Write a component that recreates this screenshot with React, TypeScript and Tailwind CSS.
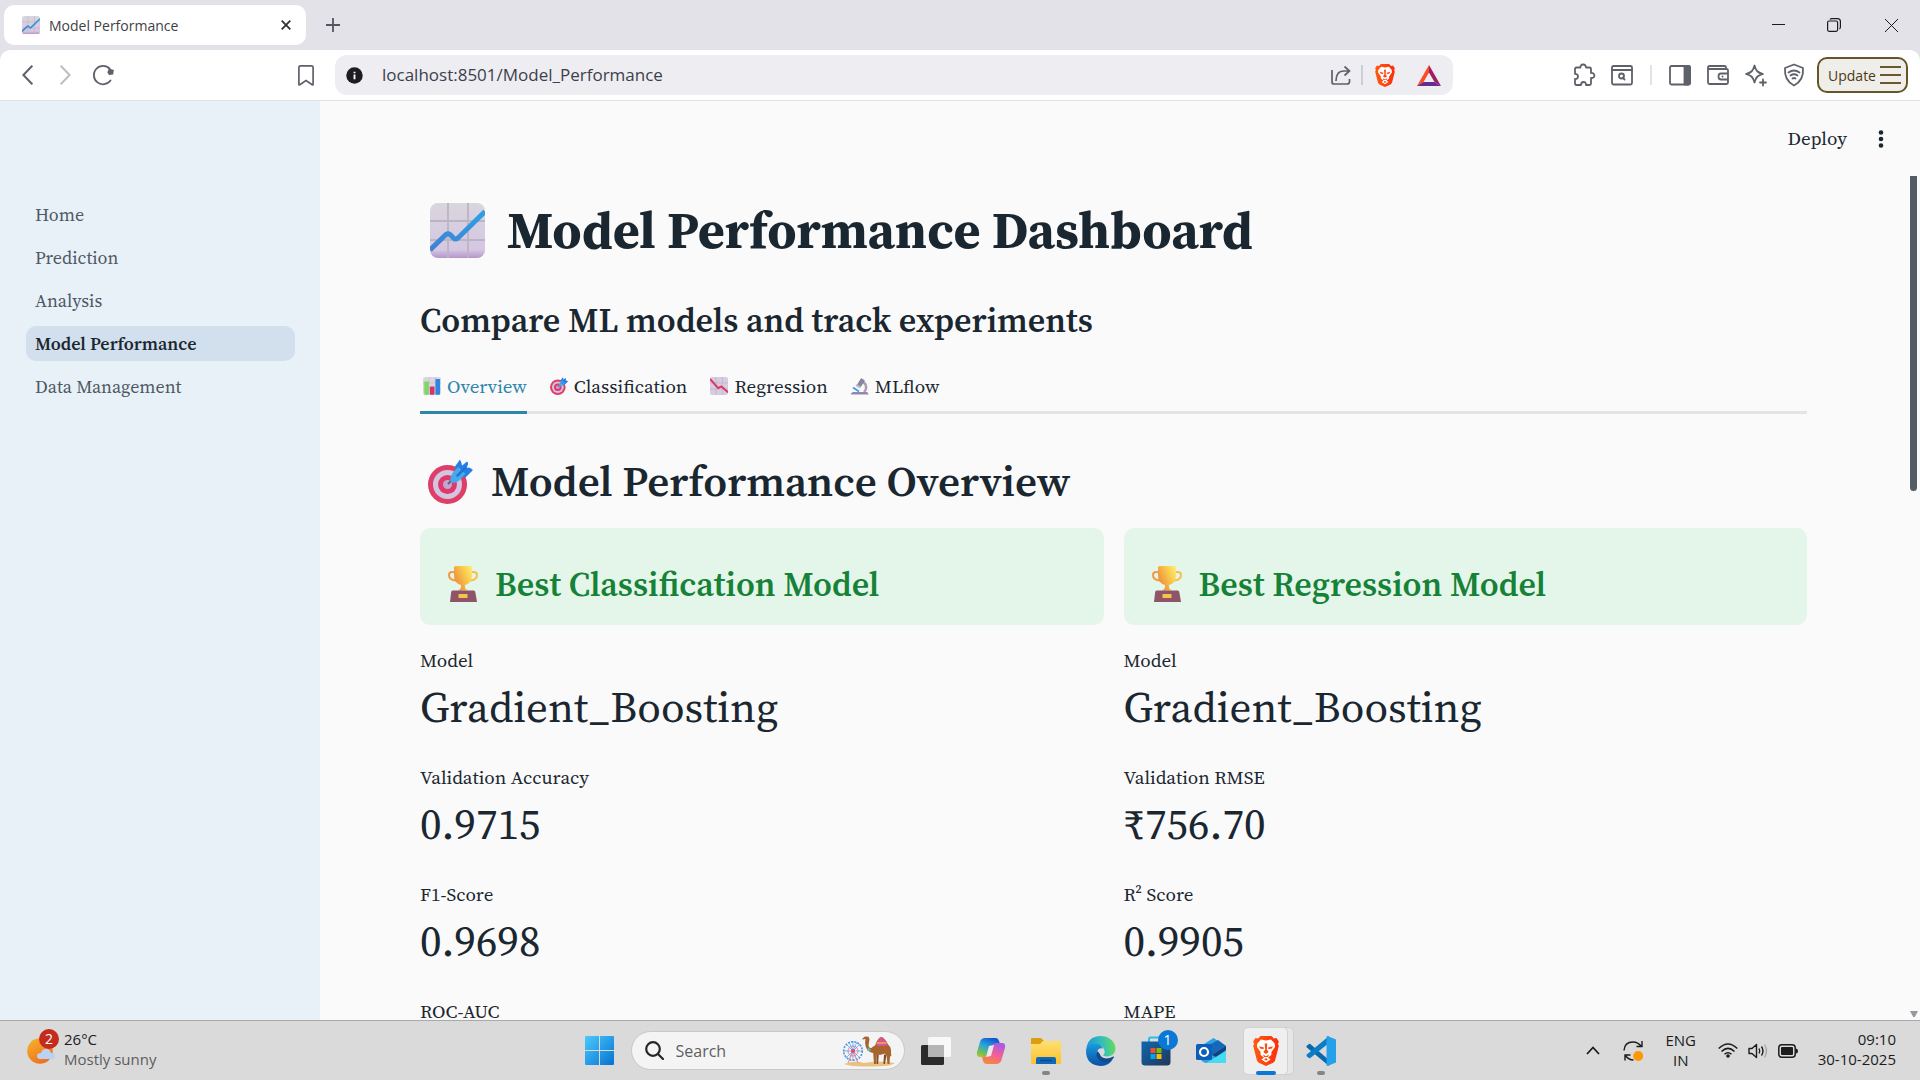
import { useState, type ReactNode } from "react";

type IconProps = { className?: string };

function ChartUp({ className }: IconProps) {
  return (
    <svg viewBox="0 0 55 55" className={className} aria-hidden="true">
      <defs>
        <linearGradient id="cu-bg" x1="0" y1="0" x2="0" y2="1">
          <stop offset="0" stopColor="#d9d6dd" />
          <stop offset="0.85" stopColor="#d5c7e2" />
          <stop offset="1" stopColor="#b595cc" />
        </linearGradient>
        <linearGradient id="cu-line" x1="0" y1="1" x2="1" y2="0">
          <stop offset="0" stopColor="#3f82d2" />
          <stop offset="1" stopColor="#2ea0e6" />
        </linearGradient>
      </defs>
      <rect width="55" height="55" rx="8" fill="url(#cu-bg)" />
      <path d="M18 0v55M38 0v55M0 18h55M0 37h55" stroke="#bcb4c4" strokeWidth="1.800" />
      <path d="M0 47 16 31.500Q18 30 20 31.500L23.500 35Q25.500 37 28 35L55 8.500" fill="none" stroke="url(#cu-line)" strokeWidth="5" />
    </svg>
  );
}

function ChartDown({ className }: IconProps) {
  return (
    <svg viewBox="0 0 55 55" className={className} aria-hidden="true">
      <rect width="55" height="55" rx="7" fill="#d6cbe0" />
      <path d="M18 0v55M38 0v55M0 18h55M0 37h55" stroke="#bcb4c4" strokeWidth="2" />
      <path d="M0 6 25 34l10-5 20 18" fill="none" stroke="#e0355f" strokeWidth="6" strokeLinejoin="round" />
    </svg>
  );
}

function BarChart({ className }: IconProps) {
  return (
    <svg viewBox="0 0 55 55" className={className} aria-hidden="true">
      <rect width="55" height="55" rx="7" fill="#dcd6e2" />
      <path d="M18 0v55M37 0v55M0 18h55M0 37h55" stroke="#c2bac9" strokeWidth="2" />
      <rect x="4" y="14" width="14" height="40" rx="2" fill="#7fd95e" />
      <rect x="21" y="29" width="14" height="25" rx="2" fill="#d6336c" />
      <rect x="38" y="6" width="14" height="48" rx="2" fill="#2f86dd" />
    </svg>
  );
}

function Target({ className }: IconProps) {
  return (
    <svg viewBox="0 0 45 45" className={className} aria-hidden="true">
      <circle cx="19.500" cy="25.500" r="19.500" fill="#dd3f68" />
      <circle cx="19.500" cy="25.500" r="14.500" fill="#d2c5e0" />
      <circle cx="19.500" cy="25.500" r="9.500" fill="#e2376b" />
      <circle cx="19.500" cy="25.500" r="4.500" fill="#bda9cf" />
      <path d="M20 25 27 18" stroke="#6c5c80" strokeWidth="2" />
      <path d="M27 12V7.500L32 .5q1.500 3 2 6L36 5l3-2.500q1.500 1 1 3L38.500 9l2.500-.5q2 .5 4 2.500l-7 7-6 .5z" fill="#2480e2" />
      <path d="M22.500 22c-1-5 3-10 8-14l3 3.500 4 3c-4 5-8 9.500-12 9.500-2 0-3-1-3-2z" fill="#46a9ea" />
      <path d="m29.500 16.500 8-8" stroke="#2374d8" strokeWidth="2.500" strokeLinecap="round" />
    </svg>
  );
}

function Microscope({ className }: IconProps) {
  return (
    <svg viewBox="0 0 18 18" className={className} aria-hidden="true">
      <path d="M10 4.500c5 .5 7 6.500 3 10.500" fill="none" stroke="#a99bb9" strokeWidth="2.400" />
      <path d="m6.500 7.500 3.700-6 3.200 2-3.600 6z" fill="#8f849f" stroke="#7c7190" strokeWidth=".6" />
      <path d="M5.500 7.200 9.800 10 9 11.500 4.600 8.800z" fill="#b9aec8" />
      <path d="m2 10.500 6 4" stroke="#3aa0ea" strokeWidth="2" />
      <path d="M0 17.500q0-2.500 2.500-2.500h13q2 0 2 2.500z" fill="#9686ab" />
    </svg>
  );
}

function Trophy({ className }: IconProps) {
  return (
    <svg viewBox="0 0 30 36" className={className} aria-hidden="true">
      <defs>
        <linearGradient id="tr-cup" x1="0" y1=".6" x2="1" y2="0">
          <stop offset="0" stopColor="#ee8a3c" />
          <stop offset=".55" stopColor="#f7c94b" />
          <stop offset="1" stopColor="#fdf07a" />
        </linearGradient>
      </defs>
      <path d="M7 6H4.500Q1 6 1 9q0 5 7 5.500" fill="none" stroke="#f09a45" strokeWidth="2" />
      <path d="M23 6h2.500Q29 6 29 9q0 5-7 5.500" fill="none" stroke="#f6c04b" strokeWidth="2" />
      <path d="M6 1.500Q6 0 7.500 0h15Q24 0 24 1.500V9q0 8-7 10v2q0 2 3 3.500H10q3-1.500 3-3.500v-2Q6 17 6 9z" fill="url(#tr-cup)" />
      <path d="M4.500 24.500h21q1.500 0 1.800 1.500L29 36H2l1.200-10q.3-1.500 1.300-1.500z" fill="#8e5468" />
      <rect x="10.500" y="28" width="9" height="4" fill="#f6c34c" />
    </svg>
  );
}

function BraveLion({ className }: IconProps) {
  return (
    <svg viewBox="0 0 26 30" className={className} aria-hidden="true">
      <defs>
        <linearGradient id="brave" x1="0" y1="0" x2="1" y2="0">
          <stop offset="0" stopColor="#ff5a12" />
          <stop offset="1" stopColor="#fb2f0c" />
        </linearGradient>
      </defs>
      <path d="M7.500 0h11l2.300 2.500L23.500 2l2.300 3.500-.8 2.500.8 2-3.600 14q-.5 1.500-2 2.700L13 30l-7.200-3.300q-1.500-1.200-2-2.700L.2 10 1 8l-.8-2.500L2.500 2l2.700.5z" fill="url(#brave)" />
      <path d="M8 3.500 13 4.500l5-1 3.800 4.200.2 3.300-3.700 5.200q.6 1.800-.3 3L15 21.500l2.500 2L13 26.500l-4.500-3 2.500-2-3-2.300q-.9-1.200-.3-3L4 11l.2-3.300z" fill="#fff" />
      <path d="m6 10.200 5 1.300-.6 1.800-3.200-.8zM20 10.200l-5 1.300.6 1.800 3.200-.8z" fill="#fb4a12" />
      <path d="M11.700 7.500h2.600l-.5 6 1.900 2.500L13 18l-2.700-2 1.900-2.500zM10 18.500l3 1.700 3-1.700-1 2.500H11zM13 22l1.800 1.500L13 24.800l-1.800-1.300z" fill="#fb4a12" />
    </svg>
  );
}

function Stroke({ className, children }: { className?: string; children: ReactNode }) {
  return (
    <svg viewBox="0 0 24 24" fill="none" stroke="currentColor" strokeWidth="1.800" strokeLinecap="round" strokeLinejoin="round" className={className} aria-hidden="true">
      {children}
    </svg>
  );
}

function ToolButton({ label, children }: { label: string; children: ReactNode }) {
  return (
    <button type="button" aria-label={label} className="flex h-8 w-[38px] items-center justify-center text-[#5e6169]">
      {children}
    </button>
  );
}

function TabStrip() {
  return (
    <div className="flex h-[50px] shrink-0 items-center bg-[#e3e2e8] pl-1 font-['Open_Sans',sans-serif]">
      <div className="flex h-10 w-[302px] items-center rounded-[10px] bg-white pr-3 pl-[18px]">
        <ChartUp className="size-[18px]" />
        <span className="ml-[9px] flex-1 text-[14px] text-[#3f4046]">Model Performance</span>
        <button type="button" aria-label="Close tab" className="flex size-4 items-center justify-center text-[#303136]">
          <svg viewBox="0 0 10 10" className="size-[10px]" stroke="currentColor" strokeWidth="1.800"><path d="m.7.7 8.600 8.600M9.300.7.7 9.300" /></svg>
        </button>
      </div>
      <button type="button" aria-label="New tab" className="ml-[19px] flex size-4 items-center justify-center text-[#55575e]">
        <svg viewBox="0 0 14 14" className="size-[14px]" stroke="currentColor" strokeWidth="1.800"><path d="M7 0v14M0 7h14" /></svg>
      </button>
      <div className="ml-auto flex text-[#1c1c1f]">
        <button type="button" aria-label="Minimize" className="flex h-8 w-14 items-center justify-center">
          <svg viewBox="0 0 13 13" className="size-[13px]" stroke="currentColor"><path d="M0 5.500h13" /></svg>
        </button>
        <button type="button" aria-label="Restore" className="flex h-8 w-14 items-center justify-center">
          <svg viewBox="0 0 14 14" className="size-[14px]" fill="none" stroke="currentColor" strokeWidth="1.200"><rect x=".6" y="3" width="10" height="10.300" rx="1.500" /><path d="M3 1.500Q3.500.6 5 .6h5.500q2.900 0 2.900 3V9q0 1.500-1 2" /></svg>
        </button>
        <button type="button" aria-label="Close window" className="flex h-8 w-[58px] items-center justify-center">
          <svg viewBox="0 0 13 13" className="size-[13px]" stroke="currentColor"><path d="m0 0 13 13M13 0 0 13" /></svg>
        </button>
      </div>
    </div>
  );
}

function Toolbar() {
  return (
    <div className="shrink-0 bg-[#e3e2e8] font-['Open_Sans',sans-serif]">
      <div className="flex h-[51px] items-center rounded-t-[10px] border-b border-[#dfdfe5] bg-white">
        <div className="flex w-[335px] shrink-0 items-center pr-[10px] pl-2">
          <ToolButton label="Back">
            <svg viewBox="0 0 11 20" className="h-5 w-[11px]" fill="none" stroke="currentColor" strokeWidth="2"><path d="M10.300.7 1.400 10l8.900 9.300" /></svg>
          </ToolButton>
          <ToolButton label="Forward">
            <svg viewBox="0 0 11 20" className="h-5 w-[11px]" fill="none" stroke="#bdbec2" strokeWidth="2"><path d="M.7.7 9.600 10 .7 19.300" /></svg>
          </ToolButton>
          <ToolButton label="Reload">
            <svg viewBox="0 0 22 22" className="size-[22px]" fill="none" stroke="currentColor" strokeWidth="1.800"><path d="M18.500 16.500A9.200 9.200 0 1 1 17.800 4.800" strokeLinecap="round" /><path d="m17 4.500 4.800 1.500-.6 4.500-4.200.5-1.700-2.700z" fill="currentColor" stroke="none" /></svg>
          </ToolButton>
          <span className="flex-1" />
          <ToolButton label="Bookmark">
            <svg viewBox="0 0 16 21" className="h-[21px] w-4" fill="none" stroke="currentColor" strokeWidth="1.700"><path d="M.9 2.500Q.9.9 2.500.9h11q1.600 0 1.600 1.600v16.800q0 1-.9.4L8 15.600l-6.200 4.100q-.9.600-.9-.4z" /></svg>
          </ToolButton>
        </div>
        <div className="mr-28 flex h-10 flex-1 items-center rounded-[12px] bg-[#eeedf2] pr-[12px] pl-[11px]">
          <svg viewBox="0 0 18 18" className="size-[17px]"><circle cx="9" cy="9" r="8.700" fill="#1d1d20" /><path d="M9 8v5M9 5v1.500" stroke="#fff" strokeWidth="2" /></svg>
          <input aria-label="Address" defaultValue="localhost:8501/Model_Performance" className="ml-[19px] min-w-0 flex-1 bg-transparent text-[17px] text-[#3d3f4c] outline-none" />
          <button type="button" aria-label="Share" className="text-[#5e6169]">
            <svg viewBox="0 0 20 20" className="size-5" fill="none" stroke="currentColor" strokeWidth="1.700"><path d="M1 5v12q0 2 2 2h13q2.500 0 2.500-2.500V14M5 16q0-10 8-10h5M13.500 1.500 18.500 6l-5 4.500" /></svg>
          </button>
          <span className="mx-[10px] h-5 w-[2px] bg-[#cfced6]" />
          <button type="button" aria-label="Brave Shields" className="mx-[2px]"><BraveLion className="h-[23px] w-5" /></button>
          <button type="button" aria-label="Brave Rewards" className="ml-5">
            <svg viewBox="0 0 24 21" className="h-[21px] w-6"><path d="M12 0 0 21l6.500-4L12 7.500z" fill="#ff4a25" /><path d="m12 0 12 21-6.500-4L12 7.500z" fill="#9e1f63" /><path d="M0 21h24l-6.500-4h-11z" fill="#662d91" /></svg>
          </button>
        </div>
        <div className="flex shrink-0 items-center pr-3">
          <ToolButton label="Extensions">
            <Stroke className="size-6"><path d="M3 6q0-1.500 1.500-1.500h4C8 1 13.500 0 14 4.500h3.500Q19 4.500 19 6v4c4.500-.5 4.500 5.500 0 5v5.500q0 1.500-1.500 1.500H14c.5-4-5-4-5 0H4.500Q3 22 3 20.500V16c4 .5 4-5.500 0-5z" /></Stroke>
          </ToolButton>
          <ToolButton label="Find in page">
            <Stroke className="size-6"><rect x="2" y="3" width="20" height="18.500" rx="1.500" /><path d="M2 7h20M14.500 16.500l-1.800-1.800" /><circle cx="11.500" cy="13" r="2.500" /></Stroke>
          </ToolButton>
          <span className="mx-[9px] h-5 w-[2px] bg-[#e2e2e7]" />
          <ToolButton label="Side panel">
            <Stroke className="size-6"><rect x="2" y="3" width="20" height="18.500" rx="1.500" /><path d="M16.500 3H20q2 0 2 2v14.500q0 2-2 2h-3.500z" fill="currentColor" /></Stroke>
          </ToolButton>
          <ToolButton label="Wallet">
            <Stroke className="size-6"><path d="M20 6V4.500Q20 3 18.500 3h-15Q2 3 2 4.500v15Q2 21 3.500 21h17q1.500 0 1.500-1.500v-12Q22 6 20.500 6H2M22 10.500h-7q-2.500 0-2.500 3t2.500 3h7M16.500 13.500h.1" /></Stroke>
          </ToolButton>
          <ToolButton label="Leo AI">
            <Stroke className="size-6"><path d="M10.500 2.500c1.500 5.500 3 7 8.500 8.500-5.500 1.500-7 3-8.500 8.500C9 14 7.500 12.500 2 11c5.500-1.500 7-3 8.500-8.500zM19 16.500v6M16 19.500h6" /></Stroke>
          </ToolButton>
          <ToolButton label="VPN">
            <Stroke className="size-6"><path d="M12 1.500 3 5c-.5 7 1 13.500 9 17.500C20 18.500 21.500 12 21 5z" /><path d="M6.500 9.500q5.500-4 11 0M8.500 12.500q3.500-2.500 7 0M10.500 15.500q1.500-1 3 0" /></Stroke>
          </ToolButton>
          <button type="button" className="ml-1 flex h-9 w-[91px] items-center justify-center gap-1 rounded-[10px] border-2 border-[#655625] bg-[#f0eeea] pl-1 text-[14px] text-[#4a3c10]">
            Update
            <svg viewBox="0 0 21 18" className="h-[18px] w-[21px]" stroke="#6a5926" strokeWidth="2"><path d="M0 1h21M0 9h21M0 17h21" /></svg>
          </button>
        </div>
      </div>
    </div>
  );
}

const pages = ["Home", "Prediction", "Analysis", "Model Performance", "Data Management"];

function Sidebar() {
  return (
    <nav aria-label="Pages" className="flex w-80 shrink-0 flex-col gap-2 bg-[#e9f1f8] pt-24 pr-[25px] pl-[26px] text-[18px] text-[#4e5964]">
      {pages.map((page) => (
        <a
          key={page}
          href={"#" + page.replace(" ", "_")}
          aria-current={page === "Model Performance" ? "page" : undefined}
          className="flex h-[35px] items-center rounded-[10px] px-[9px] aria-[current=page]:bg-[#d2dfec] aria-[current=page]:font-semibold aria-[current=page]:text-[#1b2730]"
        >
          {page}
        </a>
      ))}
    </nav>
  );
}

const tabs = [
  { name: "Overview", Icon: BarChart },
  { name: "Classification", Icon: Target },
  { name: "Regression", Icon: ChartDown },
  { name: "MLflow", Icon: Microscope },
];

const columns: { title: string; metrics: { label: string; value?: string }[] }[] = [
  {
    title: "Best Classification Model",
    metrics: [
      { label: "Model", value: "Gradient_Boosting" },
      { label: "Validation Accuracy", value: "0.9715" },
      { label: "F1-Score", value: "0.9698" },
      { label: "ROC-AUC" },
    ],
  },
  {
    title: "Best Regression Model",
    metrics: [
      { label: "Model", value: "Gradient_Boosting" },
      { label: "Validation RMSE", value: "₹756.70" },
      { label: "R² Score", value: "0.9905" },
      { label: "MAPE" },
    ],
  },
];

function Dashboard() {
  const [active, setActive] = useState("Overview");
  return (
    <main className="flex min-w-0 flex-1 flex-col">
      <header className="flex h-[75px] shrink-0 items-center justify-end pr-[29px] text-[19px]">
        <button type="button">Deploy</button>
        <button type="button" aria-label="Main menu" className="ml-6 flex w-5 justify-center">
          <svg viewBox="0 0 6 18" className="h-[18px] w-[6px]" fill="currentColor"><circle cx="3" cy="2.500" r="2.300" /><circle cx="3" cy="9" r="2.300" /><circle cx="3" cy="15.500" r="2.300" /></svg>
        </button>
      </header>
      <div className="flex min-h-0 flex-1">
        <div className="min-w-0 flex-1 overflow-hidden pt-[21px] pr-[100px] pl-[100px]">
          <h1 className="flex items-center text-[52px] leading-[66px] font-bold">
            <ChartUp className="mr-[22px] ml-[10px] size-[55px]" />
            Model Performance Dashboard
          </h1>
          <h3 className="mt-[35px] text-[34px] leading-[44px] font-semibold">Compare ML models and track experiments</h3>
          <div role="tablist" className="mt-[29px] flex gap-5 border-b-[3px] border-[#e4e4e4] text-[19px] leading-[30px]">
            {tabs.map(({ name, Icon }) => (
              <button
                key={name}
                type="button"
                role="tab"
                aria-selected={active === name}
                onClick={() => setActive(name)}
                className="-mb-[3px] flex items-center gap-[6px] border-b-[3px] border-transparent pb-[10px] pl-[3px] aria-selected:border-[#2e86ab] aria-selected:text-[#2e86ab]"
              >
                <Icon className="size-[18px]" />
                {name}
              </button>
            ))}
          </div>
          <h2 className="mt-10 flex items-center text-[43px] leading-[54px] font-semibold">
            <Target className="mr-[18px] ml-2 size-[45px]" />
            Model Performance Overview
          </h2>
          <div className="mt-5 grid grid-cols-2 gap-5">
            {columns.map((column) => (
              <section key={column.title}>
                <h3 className="flex items-center rounded-[10px] bg-[#e4f5e9] pt-[34px] pr-5 pb-[19px] pl-7 text-[34px] leading-[44px] font-semibold text-[#158237]">
                  <Trophy className="mr-[17px] h-9 w-[30px]" />
                  {column.title}
                </h3>
                <dl className="mt-5 flex flex-col gap-[25px]">
                  {column.metrics.map(({ label, value }) => (
                    <div key={label}>
                      <dt className="text-[19px] leading-[30px]">{label}</dt>
                      {value && <dd className="mt-[2px] text-[43px] leading-[60px]">{value}</dd>}
                    </div>
                  ))}
                </dl>
              </section>
            ))}
          </div>
        </div>
        <div className="flex w-[13px] shrink-0 flex-col items-center justify-between pb-[3px]">
          <span className="h-[37.5%] w-[7px] rounded-b-full bg-[#535b65]" />
          <svg viewBox="0 0 8 6" className="h-[6px] w-2" fill="#9598a3"><path d="M0 0h8L4.800 6H3.200z" /></svg>
        </div>
      </div>
    </main>
  );
}

function TaskIcon({ label, dot, children }: { label: string; dot?: boolean; children: ReactNode }) {
  return (
    <button type="button" aria-label={label} className="relative flex h-12 w-[55px] items-center justify-center">
      {children}
      {dot && <span className="absolute bottom-0 h-1 w-2 rounded-full bg-[#858585]" />}
    </button>
  );
}

function CamelScene() {
  return (
    <svg viewBox="0 0 54 32" className="h-8 w-[54px]" aria-hidden="true">
      <path d="M2 29q10-4 20-1 15-3 31 0-4 3.500-25 3.500T2 29z" fill="#e9c183" />
      <g fill="none" stroke="#4b97ea">
        <circle cx="11" cy="16" r="9.300" strokeWidth="1.600" strokeDasharray="2 1.200" />
        <circle cx="11" cy="16" r="5" stroke="#f08aa0" />
        <path d="M11 6v20M1 16h20M4 9l14 14M18 9 4 23M7 7l8 18M15 7 7 25" strokeWidth=".7" />
        <path d="m11 16-5 12M11 16l5 12" stroke="#f08a8a" />
      </g>
      <circle cx="11" cy="16" r="2" fill="#e9456e" />
      <path d="M20.500 3.500 23 1.500l3.500.2L27.500 4l-1 6.500q.5 3 3 2.500 1.500-2 3.500-2.500Q36 2 39.500 2q3.500 1 6.500 7.500 3.500 2.500 3 8l.3 3.500-1.300.500-.500 7.500h-2l-1-8.500-1.500-2-5 1.500-3.500-.5-.5 9.500h-2l-.8-11q-4.200-.5-6.700-4.500-2-4-1-9.500l-3 .5z" fill="#a8642f" />
      <path d="M34.500 19v10h1.600l.6-9M44.500 19.500 43 29h-1.600l.6-9.500" fill="#854a22" />
      <path d="M34 9.500Q37 2 39.500 2.500q3 .5 6 7l-1 1.500H35z" fill="#d9568c" />
      <path d="M34.500 8h10" stroke="#f4c34a" strokeWidth="1.200" />
      <path d="m26 12.500 3 2-1 2-3-1z" fill="#4ec2b5" />
    </svg>
  );
}

function Taskbar() {
  return (
    <footer className="grid h-[60px] shrink-0 grid-cols-[1fr_auto_1fr] items-center border-t border-[#a9a9a9] bg-[#dadada] font-['Open_Sans',sans-serif] text-[15px] leading-5 text-[#1c1c1c]">
      <button type="button" className="flex items-center justify-self-start pl-[27px] text-left">
        <span className="relative flex">
          <svg viewBox="0 0 28 26" className="h-[26px] w-7">
            <defs><linearGradient id="sun" x1="0" y1="0" x2=".6" y2="1"><stop offset="0" stopColor="#f5b62c" /><stop offset="1" stopColor="#f0701c" /></linearGradient></defs>
            <circle cx="13" cy="13" r="12.800" fill="url(#sun)" />
            <path d="M13 21q-3 0-3-3t4-3q1-4 5-4t5 4q4 0 4 3t-3 3z" fill="#b9d2f5" />
          </svg>
          <span className="absolute -top-[9px] left-3 flex size-5 items-center justify-center rounded-full bg-[#c42b1c] text-[14px] text-white">2</span>
        </span>
        <span className="ml-[9px] pb-1">
          <span className="block">26°C</span>
          <span className="block text-[#5d5d5d]">Mostly sunny</span>
        </span>
      </button>
      <div className="flex items-center">
        <TaskIcon label="Start">
          <svg viewBox="0 0 29 29" className="size-[29px]">
            <defs><linearGradient id="win" x1="0" y1="0" x2="1" y2="1"><stop offset="0" stopColor="#4cc9fb" /><stop offset="1" stopColor="#0572d2" /></linearGradient></defs>
            <path d="M1 0h13v14H0V1q0-1 1-1zM15 0h13q1 0 1 1v13H15zM0 15h14v14H1q-1 0-1-1zM15 15h14v13q0 1-1 1H15z" fill="url(#win)" />
          </svg>
        </TaskIcon>
        <label className="mr-1 ml-1 flex h-[39px] w-[274px] items-center rounded-full border border-[#c8c8c8] bg-[#f4f4f4] pr-2 pl-[13px]">
          <svg viewBox="0 0 19 19" className="size-[19px] shrink-0" fill="none" stroke="#262626" strokeWidth="2.200"><circle cx="8" cy="8" r="6.800" /><path d="m13 13 5 5" strokeLinecap="round" /></svg>
          <input type="search" aria-label="Search" placeholder="Search" className="ml-3 min-w-0 flex-1 bg-transparent text-[16px] outline-none placeholder:text-[#5f5f5f]" />
          <CamelScene />
        </label>
        <TaskIcon label="Task view">
          <svg viewBox="0 0 30 28" className="h-7 w-[30px]"><rect x="0" y="8" width="23" height="20" rx="1.500" fill="#2b2b2b" /><rect x="7" y="0" width="23" height="20" rx="1.500" fill="#f8f8f8" /><path d="M7 8h16v12H7z" fill="#b5b5b5" /></svg>
        </TaskIcon>
        <TaskIcon label="Copilot">
          <svg viewBox="0 0 30 28" className="h-7 w-[30px]">
            <defs>
              <linearGradient id="cp1" x1=".6" y1="0" x2=".2" y2="1"><stop offset="0" stopColor="#1557d0" /><stop offset=".35" stopColor="#25a5dc" /><stop offset=".7" stopColor="#7cc04a" /><stop offset="1" stopColor="#f0c927" /></linearGradient>
              <linearGradient id="cp2" x1=".7" y1="0" x2=".3" y2="1"><stop offset="0" stopColor="#a75ae8" /><stop offset=".5" stopColor="#ef5f9a" /><stop offset="1" stopColor="#f7883c" /></linearGradient>
            </defs>
            <path d="M20 1q2 0 3 3l1.500 4H21q-3 0-4 3l-3.500 11q-1 3-4 3L9 20H4q-4 0-3-5L4 5q1-4 5-4z" fill="url(#cp1)" />
            <path d="M10 27q-2 0-3-3l-1-4h3q3 0 4-3l3.500-9q1-2 4-2H26q4 0 3 5l-3 10q-1 6-6 6z" fill="url(#cp2)" />
            <path d="m13 9 5-1-3 11-5 1z" fill="#f3e4ec" />
          </svg>
        </TaskIcon>
        <TaskIcon label="File Explorer" dot>
          <svg viewBox="0 0 30 28" className="h-7 w-[30px]">
            <defs><linearGradient id="fo" x1="0" y1="0" x2="0" y2="1"><stop offset="0" stopColor="#ffdf70" /><stop offset="1" stopColor="#fbc12d" /></linearGradient></defs>
            <path d="M0 2q0-1 1-1h9l3 3h-1l-3 4H0z" fill="#dd9d0e" />
            <path d="M0 7h9l3-3h17q1 0 1 1v21q0 1-1 1H1q-1 0-1-1z" fill="url(#fo)" />
            <path d="M5 27v-5q0-2 2-2h16q2 0 2 2v5z" fill="#0f68b8" /><path d="M9 23.500h12" stroke="#0a4a8c" strokeWidth="1.500" />
          </svg>
        </TaskIcon>
        <TaskIcon label="Edge">
          <svg viewBox="0 0 30 30" className="size-[30px]">
            <defs>
              <linearGradient id="ed1" x1="0" y1=".5" x2="1" y2=".4"><stop offset="0" stopColor="#1c93db" /><stop offset=".6" stopColor="#37c2b4" /><stop offset="1" stopColor="#67dc54" /></linearGradient>
              <linearGradient id="ed2" x1="0" y1="0" x2="0" y2="1"><stop offset="0" stopColor="#199be0" /><stop offset="1" stopColor="#0c4fa3" /></linearGradient>
            </defs>
            <path d="M0 15Q1 0 15 0q9 0 13.500 8Q31 15 27 18.500q-5 3.500-10 1 4-4-1-9Q7 7 0 15z" fill="url(#ed1)" />
            <path d="M0 15Q2 7 9 7.500q6 .5 8 5-5-1-6 4-.5 6 6 8 5 1.500 10-1.500-4 7-12 7Q0 29 0 15z" fill="url(#ed2)" />
            <path d="M11.500 15q-4 7 5 11 6 1.500 10.500-3.500 2-2 .5-2-11 5-14-3z" fill="#15498e" />
          </svg>
        </TaskIcon>
        <TaskIcon label="Microsoft Store">
          <svg viewBox="0 0 30 30" className="size-[30px]">
            <defs><linearGradient id="st" x1="0" y1="0" x2="1" y2="1"><stop offset="0" stopColor="#0f67b1" /><stop offset="1" stopColor="#22375a" /></linearGradient></defs>
            <path d="M8 6V3q0-1.500 1.500-1.500h11Q22 1.500 22 3v3" fill="none" stroke="#2dbbe8" strokeWidth="2" />
            <path d="M.5 5.500h29V26q0 3.500-3.500 3.500H4Q.5 29.500.5 26z" fill="url(#st)" />
            <path d="M9.500 12h5v5h-5z" fill="#f25022" /><path d="M15.500 12h5v5h-5z" fill="#7fba00" /><path d="M9.500 18h5v5h-5z" fill="#00a4ef" /><path d="M15.500 18h5v5h-5z" fill="#ffb900" />
          </svg>
          <span className="absolute top-[3px] right-[6px] flex size-5 items-center justify-center rounded-full bg-[#0a78d4] text-[14px] text-white">1</span>
        </TaskIcon>
        <TaskIcon label="Outlook">
          <svg viewBox="0 0 30 28" className="h-7 w-[30px]">
            <path d="M5 9 17.500 1 30 9v15q0 2-2 2H10q-3 0-5-3z" fill="#2ea3e4" />
            <path d="M8 11 22 3l8 6-14 9z" fill="#1768b8" /><path d="m16 18 14-9v4l-10 7z" fill="#123f7d" />
            <path d="m10 26 20-12v10q0 2-2 2z" fill="#45dcf2" />
            <rect x="0" y="7" width="16" height="16" rx="1.500" fill="#0c5fb9" /><circle cx="8" cy="15" r="4" fill="none" stroke="#fff" strokeWidth="2.200" />
          </svg>
        </TaskIcon>
        <button type="button" aria-label="Brave" className="relative flex h-12 w-[55px] items-center justify-center">
          <span className="absolute inset-y-0 right-0 left-3 rounded-[5px] border border-[#cfcfcf] bg-[#e6e6e6]" />
          <span className="absolute inset-y-0 right-[6px] left-1 rounded-[5px] border border-[#d2d2d2] bg-[#efefef]" />
          <BraveLion className="relative h-[30px] w-[26px]" />
          <span className="absolute bottom-0 h-1 w-5 rounded-full bg-[#0a78d4]" />
        </button>
        <TaskIcon label="Visual Studio Code" dot>
          <svg viewBox="0 0 30 30" className="size-[30px]">
            <path d="m1 9.500 2-1.500q.7-.4 1.300 0L23 24v6L.8 11.500Q0 10.500 1 9.500z" fill="#0a68ad" />
            <path d="m1 20.500 2 1.500q.7.400 1.300 0L23 7V0L.8 18.500q-.8 1 .2 2z" fill="#0b7dc6" />
            <path d="M21.500 0 30 3.500v23L21.500 30q-1 0-1-1V1q0-1 1-1z" fill="#24a1ea" />
          </svg>
        </TaskIcon>
      </div>
      <div className="flex items-center justify-self-end pr-6">
        <button type="button" aria-label="Show hidden icons"><svg viewBox="0 0 14 9" className="h-[9px] w-[14px]" fill="none" stroke="currentColor" strokeWidth="1.800"><path d="m1 8 6-6.500L13 8" /></svg></button>
        <button type="button" aria-label="Windows Update" className="ml-[23px]">
          <svg viewBox="0 0 20 22" className="h-[22px] w-5" fill="none" stroke="currentColor" strokeWidth="1.400"><path d="M1 10.500Q1.500 2 10 2q5 0 8.500 4.500M19 1v5.500h-5.500M2 20.500V15h5.500M2 15q3.500 5 8.500 5" /><circle cx="15.200" cy="16" r="5" fill="#ff9800" stroke="none" /></svg>
        </button>
        <button type="button" className="ml-[22px] w-8 pb-[2px] text-center">ENG<br />IN</button>
        <button type="button" aria-label="Network, volume and battery" className="ml-[21px] flex items-center gap-[10px]">
          <svg viewBox="0 0 20 15" className="h-[15px] w-5" fill="none" stroke="currentColor" strokeWidth="1.500"><path d="M.7 5.500q9.300-9 18.600 0M3.500 8.500q6.500-6.200 13 0M6.500 11.200q3.500-3 7 0" /><circle cx="10" cy="13" r="1.800" fill="currentColor" stroke="none" /></svg>
          <svg viewBox="0 0 20 16" className="h-4 w-5" fill="none" stroke="currentColor" strokeWidth="1.400" strokeLinejoin="round"><path d="M1 5.500h3L8.500 1.500v13L4 10.500H1zM11 5.500q1.500 2.500 0 5M13.500 3.500q3 4.500 0 9" /><path d="M16.500 1.500q4 6.500 0 13" stroke="#a8a8a8" /></svg>
          <svg viewBox="0 0 20 14" className="h-[14px] w-5"><rect x=".8" y=".8" width="16.400" height="12.400" rx="3" fill="none" stroke="currentColor" strokeWidth="1.500" /><rect x="3" y="3" width="12" height="8" rx="1" fill="currentColor" /><path d="M18 4.500q2 0 2 2.500t-2 2.500z" fill="currentColor" /></svg>
        </button>
        <button type="button" className="ml-5 pb-1 text-right">09:10<br />30-10-2025</button>
      </div>
    </footer>
  );
}

export default function App() {
  return (
    <div className="flex h-screen flex-col overflow-hidden">
      <TabStrip />
      <Toolbar />
      <div className="flex min-h-0 flex-1 bg-[#fafafa] font-['Source_Serif_4','Liberation_Serif',serif] text-[#1b2730]">
        <Sidebar />
        <Dashboard />
      </div>
      <Taskbar />
    </div>
  );
}
